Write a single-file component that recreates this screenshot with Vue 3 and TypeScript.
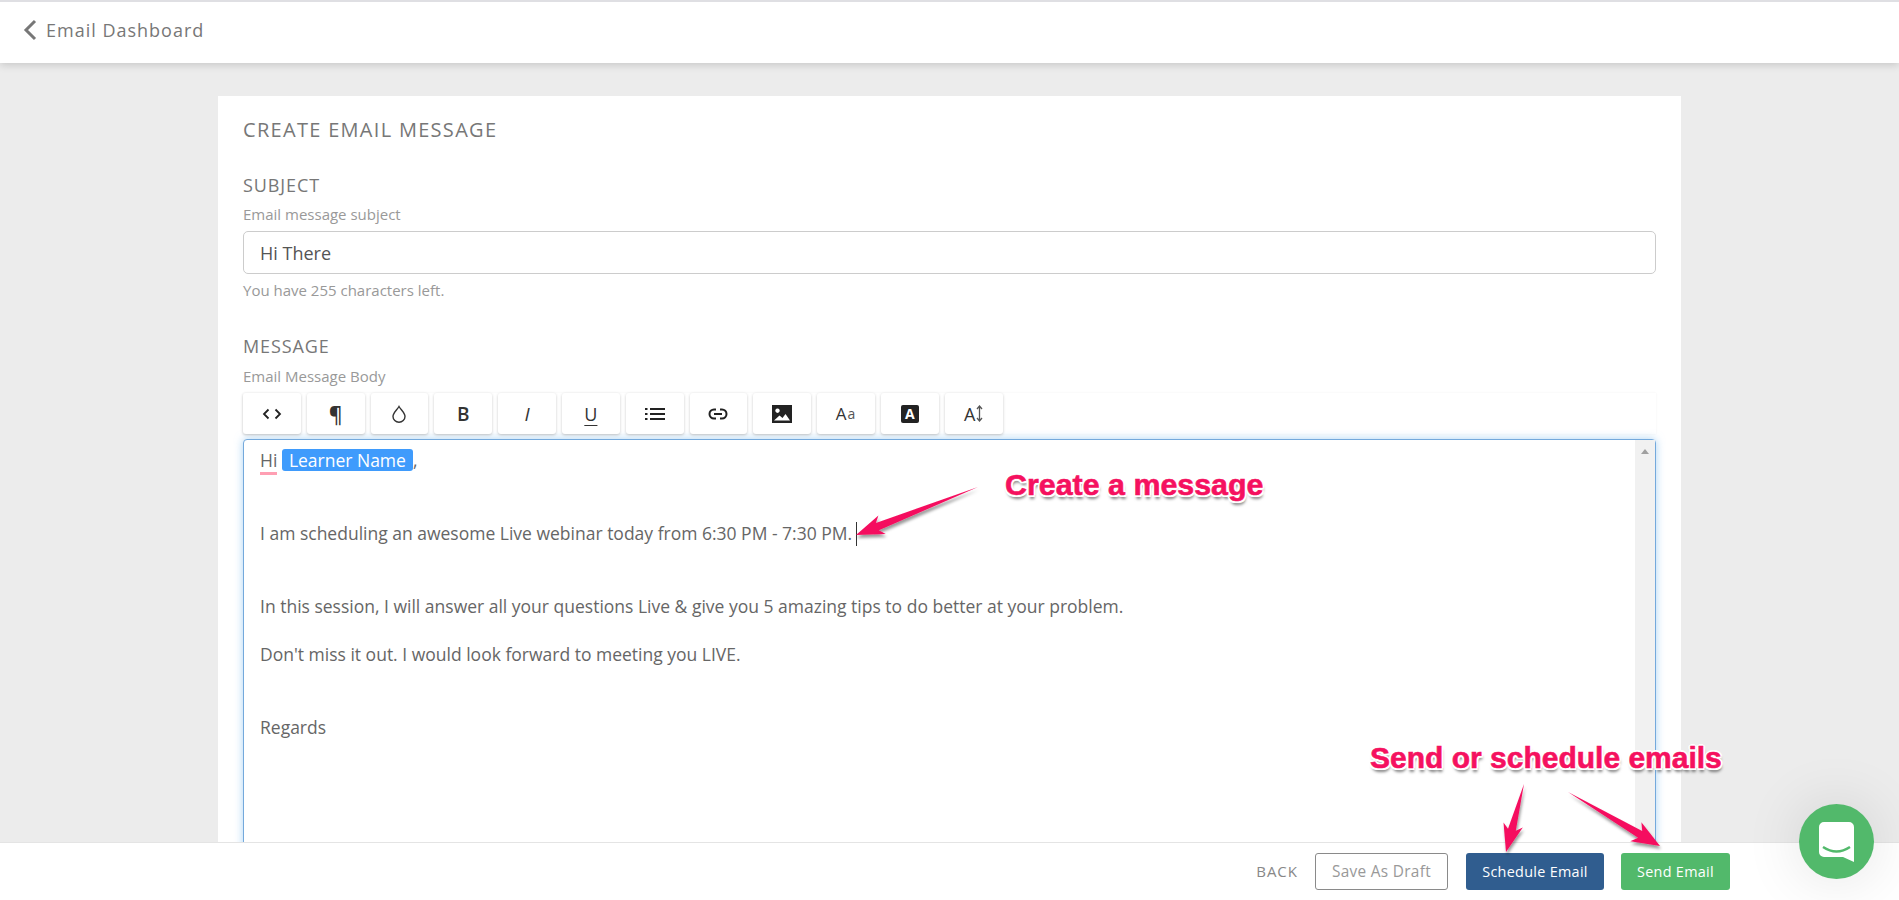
<script setup lang="ts">
interface Arrow { tail: [number, number]; tip: [number, number]; head: number; wing: number }
const arrows: Arrow[] = [
  { tail: [978, 487], tip: [856, 535], head: 28, wing: 10 },
  { tail: [1524, 784], tip: [1506, 852], head: 28, wing: 10 },
  { tail: [1568, 792], tip: [1660, 846], head: 28, wing: 11 },
]
function arrowPoints(a: Arrow): string {
  const dx = a.tip[0] - a.tail[0]
  const dy = a.tip[1] - a.tail[1]
  const len = Math.hypot(dx, dy)
  const ux = dx / len
  const uy = dy / len
  const nx = -uy
  const ny = ux
  const at = (back: number, side: number) =>
    `${(a.tip[0] - ux * back + nx * side).toFixed(1)},${(a.tip[1] - uy * back + ny * side).toFixed(1)}`
  return [
    `${a.tail[0]},${a.tail[1]}`,
    at(a.head - 5, 4),
    at(a.head, a.wing),
    `${a.tip[0]},${a.tip[1]}`,
    at(a.head, -a.wing),
    at(a.head - 5, -4),
  ].join(' ')
}
</script>

<template>
  <div class="page">
    <header class="topbar">
      <svg class="back-icon" width="16" height="22" viewBox="0 0 16 22">
        <path d="M13 2 L4 11 L13 20" fill="none" stroke="#777" stroke-width="3" />
      </svg>
      <span>Email Dashboard</span>
    </header>

    <main class="main">
      <section class="card">
        <h1 class="title">CREATE EMAIL MESSAGE</h1>
        <h2 class="label subject-label">SUBJECT</h2>
        <div class="hint sub">Email message subject</div>
        <div class="input">Hi There</div>
        <div class="hint left">You have 255 characters left.</div>
        <h2 class="label message-label">MESSAGE</h2>
        <div class="hint">Email Message Body</div>

        <div class="toolbar">
          <button class="tool">
            <svg width="20" height="12" viewBox="0 0 20 12"><path d="M6.5 1.5 L2 6 L6.5 10.5 M13.5 1.5 L18 6 L13.5 10.5" fill="none" stroke="#222" stroke-width="1.8" /></svg>
          </button>
          <button class="tool glyph para">¶</button>
          <button class="tool">
            <svg width="14" height="18" viewBox="0 0 14 18"><path d="M7 1.5 C9 5 13 8 13 11.5 A6 5.7 0 0 1 1 11.5 C1 8 5 5 7 1.5 Z" fill="none" stroke="#333" stroke-width="1.4" /></svg>
          </button>
          <button class="tool glyph bold">B</button>
          <button class="tool glyph italic">I</button>
          <button class="tool glyph under">U</button>
          <button class="tool">
            <svg width="20" height="14" viewBox="0 0 20 14"><path d="M5 2 H20 M5 7 H20 M5 12 H20" stroke="#222" stroke-width="2.2" /><path d="M0 2 H2.5 M0 7 H2.5 M0 12 H2.5" stroke="#222" stroke-width="2" /></svg>
          </button>
          <button class="tool">
            <svg width="20" height="12" viewBox="0 0 20 12"><path d="M8 1.5 H6 A4.5 4.5 0 0 0 6 10.5 H8 M12 1.5 H14 A4.5 4.5 0 0 1 14 10.5 H12 M6 6 H14" fill="none" stroke="#222" stroke-width="2" /></svg>
          </button>
          <button class="tool">
            <svg width="20" height="18" viewBox="0 0 20 18"><path fill-rule="evenodd" d="M0 0 H20 V18 H0 Z M5.5 3.5 a2.2 2.2 0 1 0 .01 0 Z M2 15.5 H18 L13.5 9 L10.5 13 L7.5 10.5 Z" fill="#222" /></svg>
          </button>
          <button class="tool glyph size">A<small>a</small></button>
          <button class="tool"><span class="badge">A</span></button>
          <button class="tool glyph height">A<svg width="7" height="17" viewBox="0 0 7 17"><path d="M3.5 1 V16 M1 4 L3.5 1 L6 4 M1 13 L3.5 16 L6 13" fill="none" stroke="#555" stroke-width="1.3" /></svg></button>
        </div>

        <div class="editor">
          <div class="editor-body">
            <p><span class="misspelled">Hi</span> <span class="token">Learner Name</span>,</p>
            <p class="gap-a">I am scheduling an awesome Live webinar today from 6:30 PM - 7:30 PM.<span class="caret"></span></p>
            <p class="gap-c">In this session, I will answer all your questions Live &amp; give you 5 amazing tips to do better at your problem.</p>
            <p class="gap-b">Don't miss it out. I would look forward to meeting you LIVE.</p>
            <p class="gap-a">Regards</p>
          </div>
          <div class="scrollbar"><span class="scroll-up"></span></div>
        </div>
      </section>
    </main>

    <footer class="footer">
      <span class="back">BACK</span>
      <button class="btn draft">Save As Draft</button>
      <button class="btn schedule">Schedule Email</button>
      <button class="btn send">Send Email</button>
    </footer>

    <div class="chat">
      <svg width="35" height="40" viewBox="0 0 35 40">
        <path d="M5 0 H30 A5 5 0 0 1 35 5 V40 L24 35 H5 A5 5 0 0 1 0 30 V5 A5 5 0 0 1 5 0 Z" fill="#fff" />
        <path d="M4 25 Q17.5 34 31 25" fill="none" stroke="#52b96b" stroke-width="2.4" />
      </svg>
    </div>

    <svg class="arrows" width="1899" height="900" viewBox="0 0 1899 900">
      <defs>
        <filter id="arrow-shadow" x="-30%" y="-30%" width="160%" height="160%">
          <feDropShadow dx="1" dy="3" stdDeviation="1.6" flood-color="#000" flood-opacity="0.4" />
        </filter>
      </defs>
      <polygon v-for="(a, i) in arrows" :key="i" :points="arrowPoints(a)" fill="#f5115f" filter="url(#arrow-shadow)" />
    </svg>
    <div class="note note-create">Create a message</div>
    <div class="note note-send">Send or schedule emails</div>
  </div>
</template>

<style>
html, body { margin: 0; padding: 0; overflow: hidden; }
</style>

<style scoped>
.page {
  position: relative;
  width: 1899px;
  height: 900px;
  display: flex;
  flex-direction: column;
  overflow: hidden;
  background: #ececec;
  font-family: "Open Sans", "Noto Sans", sans-serif;
  color: #666;
}
.topbar {
  height: 61px;
  flex: none;
  display: flex;
  align-items: center;
  gap: 8px;
  padding-left: 22px;
  border-top: 2px solid #dfdfe3;
  background: #fff;
  box-shadow: 0 2px 8px rgba(0, 0, 0, 0.16);
  font-size: 18px;
  letter-spacing: 1px;
  color: #777;
  position: relative;
  z-index: 1;
}
.topbar span { position: relative; top: -3px; }
.back-icon { flex: none; position: relative; top: -3px; }
.main {
  flex: 1;
  min-height: 0;
  overflow: hidden;
  padding: 33px 218px 0;
}
.card {
  height: 100%;
  box-sizing: border-box;
  padding: 0 25px;
  background: #fff;
}
.title {
  margin: 0;
  padding-top: 22px;
  font-size: 20px;
  line-height: 24px;
  font-weight: 400;
  letter-spacing: 1.3px;
  color: #777;
}
.label {
  margin: 0;
  font-size: 18px;
  line-height: 24px;
  font-weight: 400;
  letter-spacing: 0.9px;
  color: #777;
}
.subject-label { margin-top: 31px; }
.message-label { margin-top: 34px; }
.hint {
  font-size: 15px;
  line-height: 20px;
  margin-top: 8px;
  color: #999;
}
.hint.sub { margin-top: 7px; }
.hint.left { margin-top: 6px; }
.input {
  margin-top: 7px;
  height: 43px;
  box-sizing: border-box;
  display: flex;
  align-items: center;
  padding-left: 16px;
  border: 1.5px solid #ccc;
  border-radius: 5px;
  font-size: 18px;
  color: #555;
}
.toolbar {
  margin-top: 7px;
  height: 41px;
  display: flex;
  gap: 6px;
  background: #fff;
  box-shadow: 0 0 2px rgba(0, 0, 0, 0.06);
}
.tool {
  width: 57.8px;
  height: 41px;
  flex: none;
  padding: 0;
  display: flex;
  align-items: center;
  justify-content: center;
  border: 0;
  border-radius: 3px;
  background: #fff;
  box-shadow: 0 1px 3px rgba(0, 0, 0, 0.22);
  font-family: "Open Sans", sans-serif;
  font-size: 16px;
  color: #333;
}
.glyph { font-size: 18px; }
.para { font-size: 21px; font-weight: 600; }
.bold { font-weight: 600; font-size: 19px; }
.italic { font-style: italic; font-size: 19px; }
.under { text-decoration: underline; text-underline-offset: 4px; }
.size { letter-spacing: 1px; font-size: 17px; }
.size small { font-size: 14px; color: #555; }
.height { gap: 1px; }
.badge {
  width: 18px;
  height: 18px;
  display: flex;
  align-items: center;
  justify-content: center;
  border-radius: 2px;
  background: #222;
  color: #fff;
  font-size: 14px;
  font-weight: 700;
}
.editor {
  margin-top: 5px;
  height: 440px;
  box-sizing: border-box;
  display: flex;
  border: 1.5px solid #74a9dc;
  border-radius: 4px;
  box-shadow: 0 0 8px rgba(102, 175, 233, 0.55);
  background: #fff;
}
.editor-body {
  flex: 1;
  padding: 8px 16px;
  font-size: 17.5px;
  line-height: 24px;
  color: #666;
}
.editor-body p { margin: 0; }
.gap-a { padding-top: 49px; }
.gap-c { padding-top: 48px; }
.gap-b { padding-top: 24px; }
.misspelled { border-bottom: 3px solid #ff9fb3; }
.token {
  display: inline-block;
  padding: 0 7px;
  line-height: 22px;
  border-radius: 3px;
  background: #3f9bfc;
  color: #fff;
}
.caret {
  display: inline-block;
  width: 1px;
  height: 24px;
  margin-left: 4px;
  vertical-align: -6px;
  background: #333;
}
.scrollbar {
  width: 20px;
  flex: none;
  background: #f1f1f1;
  display: flex;
  justify-content: center;
  padding-top: 9px;
  box-sizing: border-box;
}
.scroll-up {
  width: 0;
  height: 0;
  border-left: 4.5px solid transparent;
  border-right: 4.5px solid transparent;
  border-bottom: 5px solid #a0a0a0;
}
.footer {
  height: 58px;
  flex: none;
  box-sizing: border-box;
  display: flex;
  align-items: center;
  justify-content: flex-end;
  padding: 0 169px 0 0;
  background: #fff;
  border-top: 1px solid #e4e4e4;
  position: relative;
}
.back {
  margin-right: 17px;
  position: relative;
  top: -1px;
  font-size: 15px;
  letter-spacing: 1px;
  color: #888;
}
.btn {
  height: 37px;
  box-sizing: border-box;
  padding: 0;
  border-radius: 3px;
  font-family: "Open Sans", sans-serif;
  font-size: 14.4px;
  letter-spacing: 0.3px;
}
.draft {
  width: 133px;
  background: #fff;
  border: 1.5px solid #8a8a8a;
  color: #999;
  font-size: 15.4px;
  margin-right: 18px;
}
.schedule {
  width: 138px;
  background: #305d8f;
  border: 0;
  color: #fff;
  margin-right: 17px;
}
.send {
  width: 109px;
  background: #52b96b;
  border: 0;
  color: #fff;
}
.chat {
  position: absolute;
  left: 1799px;
  top: 804px;
  width: 75px;
  height: 75px;
  display: flex;
  align-items: center;
  justify-content: center;
  border-radius: 50%;
  background: #52b96b;
  box-shadow: 0 0 60px rgba(0, 0, 0, 0.12);
}
.arrows {
  position: absolute;
  left: 0;
  top: 0;
  pointer-events: none;
}
.note {
  position: absolute;
  white-space: nowrap;
  font-family: "Liberation Sans", Arial, sans-serif;
  font-weight: 700;
  font-size: 30px;
  line-height: 36px;
  color: #f5115f;
  -webkit-text-stroke: 0.6px #f5115f;
  text-shadow:
    -2px 0 0 #fff, 2px 0 0 #fff, 0 -2px 0 #fff, 0 2px 0 #fff,
    -1.5px -1.5px 0 #fff, 1.5px -1.5px 0 #fff, -1.5px 1.5px 0 #fff, 1.5px 1.5px 0 #fff,
    1px 4px 3px rgba(0, 0, 0, 0.5);
}
.note-create { left: 1005px; top: 466px; font-size: 30.4px; }
.note-send { left: 1370px; top: 740px; }
</style>
